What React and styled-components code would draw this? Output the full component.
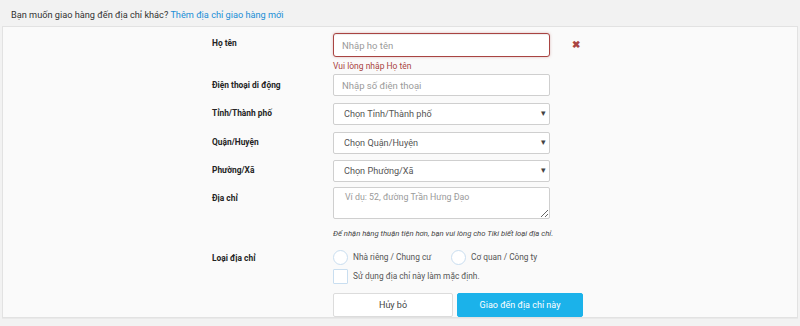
import React from 'react';
import styled, { createGlobalStyle } from 'styled-components';

const GlobalStyle = createGlobalStyle`
body {
  margin: 0;
  background: #f2f2f2;
  font-family: Roboto, "Noto Sans", Arial, sans-serif;
  color: #333;
}
`;

const Page = styled.div`
width: 800px;
height: 326px;
box-sizing: border-box;
padding: 8px 2px 0 2px;
`;

const Intro = styled.div`
padding-left: 9px;
font-size: 9.2px;
line-height: 14px;
height: 14px;
margin-bottom: 4px;
color: #333;

a {
    color: #1a8ed6;
    text-decoration: none;
}
`;

const Panel = styled.div`
background: #fafafa;
border: 1px solid #e2e2e2;
box-shadow: 0 1px 0 #e9e9e9;
padding: 6px 0 1px 209px;
height: 292px;
box-sizing: border-box;
display: flex;
flex-direction: column;
`;

const Row = styled.div`
display: grid;
grid-template-columns: 121px 217px 1fr;
align-items: ${(p) => (p.$center ? 'center' : 'start')};
margin-top: ${(p) => p.$mt || 0}px;
`;

const Label = styled.div`
font-size: 8.4px;
font-weight: 700;
line-height: 12px;
color: #242424;
padding-top: ${(p) => (p.$center ? 0 : p.$pt ?? 5)}px;
`;

const Field = styled.div`
display: flex;
flex-direction: column;
`;

const Wide = styled.div`
grid-column: 2 / 4;
white-space: nowrap;
`;

const Input = styled.input`
box-sizing: border-box;
width: 100%;
height: ${(p) => (p.$error ? 24 : 22)}px;
border: 1px solid ${(p) => (p.$error ? '#a94442' : '#cfcfcf')};
border-radius: ${(p) => (p.$error ? 3 : 2)}px;
box-shadow: ${(p) => (p.$error ? 'inset 0 1px 1px rgba(0,0,0,.075), 0 0 3px rgba(169,68,66,.35)' : 'none')};
background: #fff;
padding: 0 8px;
font-family: inherit;
font-size: 9.5px;
color: #555;
outline: none;

&::placeholder {
    color: #9a9a9a;
}
`;

const ErrorText = styled.div`
font-size: 8.5px;
line-height: 12px;
color: #a94442;
margin-top: 3px;
`;

const Close = styled.div`
padding-left: 22px;
font-size: 10px;
font-weight: 700;
color: #a94442;
line-height: 12px;
padding-top: 6px;
`;

const SelectWrap = styled.div`
position: relative;
`;

const Select = styled.select`
box-sizing: border-box;
width: 100%;
height: 22px;
border: 1px solid #cfcfcf;
border-radius: 2px;
background: #fff;
padding: 0 0 0 10px;
font-family: inherit;
font-size: 9.1px;
color: #555;
appearance: none;
-webkit-appearance: none;
outline: none;
`;

const Caret = styled.span`
position: absolute;
right: 4px;
top: 5px;
font-size: 9px;
line-height: 12px;
color: #444;
pointer-events: none;
`;

const TextArea = styled.textarea`
box-sizing: border-box;
width: 100%;
height: 32px;
border: 1px solid #cfcfcf;
border-radius: 2px;
background: #fff;
padding: 4px 11px;
font-family: inherit;
font-size: 8.8px;
color: #555;
outline: none;
display: block;

&::placeholder {
    color: #9a9a9a;
}
`;

const Hint = styled(Wide)`
font-size: 7.7px;
font-style: italic;
line-height: 12px;
color: #444;
`;

const Options = styled(Wide)`
display: grid;
grid-template-columns: 118px auto;
`;

const Option = styled.label`
display: flex;
align-items: center;
gap: 5px;
font-size: 8.3px;
color: #555;
line-height: 15px;
white-space: nowrap;
`;

const Mark = styled.span`
box-sizing: border-box;
width: 15px;
height: 15px;
flex: none;
border: 1px solid #c9def0;
border-radius: ${(p) => (p.$round ? '50%' : '1px')};
background: #fff;
`;

const Buttons = styled(Wide)`
display: flex;
gap: 4px;
`;

const Button = styled.button`
box-sizing: border-box;
height: 24px;
width: ${(p) => (p.$primary ? 126 : 120)}px;
border: 1px solid ${(p) => (p.$primary ? '#1bb2ea' : '#dcdcdc')};
border-radius: 2px;
background: ${(p) => (p.$primary ? '#1bb2ea' : '#fff')};
color: ${(p) => (p.$primary ? '#fff' : '#444')};
font-family: inherit;
font-size: 9px;
cursor: pointer;
`;

const SelectField = ({ text }) => (
    <SelectWrap>
        <Select defaultValue="">
            <option value="">{text}</option>
        </Select>
        <Caret>▾</Caret>
    </SelectWrap>
);

export default function App() {
    return (
        <Page>
            <GlobalStyle />
            <Intro>
                Bạn muốn giao hàng đến địa chỉ khác? <a href="#">Thêm địa chỉ giao hàng mới</a>
            </Intro>

            <Panel>
                <Row>
                    <Label $pt={4}>Họ tên</Label>
                    <Field>
                        <Input $error placeholder="Nhập họ tên" />
                        <ErrorText>Vui lòng nhập Họ tên</ErrorText>
                    </Field>
                    <Close>✖</Close>
                </Row>

                <Row $mt={2}>
                    <Label>Điện thoại di động</Label>
                    <Input placeholder="Nhập số điện thoại" />
                </Row>

                <Row $mt={6}>
                    <Label>Tỉnh/Thành phố</Label>
                    <SelectField text="Chọn Tỉnh/Thành phố" />
                </Row>

                <Row $mt={6}>
                    <Label>Quận/Huyện</Label>
                    <SelectField text="Chọn Quận/Huyện" />
                </Row>

                <Row $mt={5}>
                    <Label>Phường/Xã</Label>
                    <SelectField text="Chọn Phường/Xã" />
                </Row>

                <Row $mt={5}>
                    <Label>Địa chỉ</Label>
                    <TextArea placeholder="Ví dụ: 52, đường Trần Hưng Đạo" />
                </Row>

                <Row $mt={9}>
                    <span />
                    <Hint>Để nhận hàng thuận tiện hơn, bạn vui lòng cho Tiki biết loại địa chỉ.</Hint>
                </Row>

                <Row $mt={10} $center>
                    <Label $center>Loại địa chỉ</Label>
                    <Options>
                        <Option>
                            <Mark $round />
                            Nhà riêng / Chung cư
                        </Option>
                        <Option>
                            <Mark $round />
                            Cơ quan / Công ty
                        </Option>
                    </Options>
                </Row>

                <Row $mt={4}>
                    <span />
                    <Wide>
                        <Option>
                            <Mark />
                            Sử dụng địa chỉ này làm mặc định.
                        </Option>
                    </Wide>
                </Row>

                <Row $mt={9}>
                    <span />
                    <Buttons>
                        <Button>Hủy bỏ</Button>
                        <Button $primary>Giao đến địa chỉ này</Button>
                    </Buttons>
                </Row>
            </Panel>
        </Page>
    );
}
